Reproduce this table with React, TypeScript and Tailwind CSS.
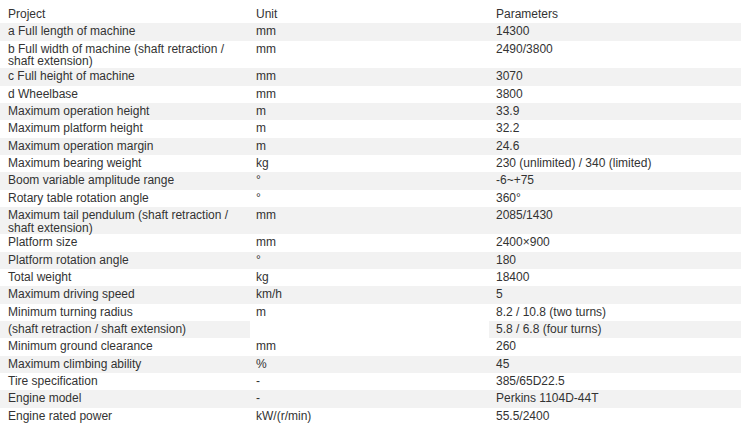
const rows: [string, string | null, string][] = [
  ['a Full length of machine', 'mm', '14300'],
  ['b Full width of machine (shaft retraction / shaft extension)', 'mm', '2490/3800'],
  ['c Full height of machine', 'mm', '3070'],
  ['d Wheelbase', 'mm', '3800'],
  ['Maximum operation height', 'm', '33.9'],
  ['Maximum platform height', 'm', '32.2'],
  ['Maximum operation margin', 'm', '24.6'],
  ['Maximum bearing weight', 'kg', '230 (unlimited) / 340 (limited)'],
  ['Boom variable amplitude range', '°', '-6~+75'],
  ['Rotary table rotation angle', '°', '360°'],
  ['Maximum tail pendulum (shaft retraction / shaft extension)', 'mm', '2085/1430'],
  ['Platform size', 'mm', '2400×900'],
  ['Platform rotation angle', '°', '180'],
  ['Total weight', 'kg', '18400'],
  ['Maximum driving speed', 'km/h', '5'],
  ['Minimum turning radius', 'm', '8.2 / 10.8 (two turns)'],
  ['(shaft retraction / shaft extension)', null, '5.8 / 6.8 (four turns)'],
  ['Minimum ground clearance', 'mm', '260'],
  ['Maximum climbing ability', '%', '45'],
  ['Tire specification', '-', '385/65D22.5'],
  ['Engine model', '-', 'Perkins 1104D-44T'],
  ['Engine rated power', 'kW/(r/min)', '55.5/2400'],
]

export default function App() {
  return (
    <div className="w-[750px] h-[429px] bg-white text-[#333] text-[12px] leading-[12.8px] font-['Liberation_Sans',Arial,sans-serif]">
      <table className="w-[741px] table-fixed border-collapse">
        <colgroup>
          <col className="w-[250px]" />
          <col className="w-[239px]" />
          <col className="w-[252px]" />
        </colgroup>
        <thead>
          <tr className="h-[23.3px]">
            <th className="p-0 pl-[8px] pt-[8px] text-left font-normal align-top">Project</th>
            <th className="p-0 pl-[6px] pt-[8px] text-left font-normal align-top">Unit</th>
            <th className="p-0 pl-[7px] pt-[8px] text-left font-normal align-top">Parameters</th>
          </tr>
        </thead>
        <tbody>
          {rows.map(([name, unit, value], i) => (
            <tr key={i} className={`h-[17.33px] ${i % 2 === 0 ? 'bg-[#f2f2f2]' : ''}`}>
              <td className="p-0 pt-[2px] pl-[8px] pr-[10px] align-top">{name}</td>
              {unit !== null && (
                <td
                  rowSpan={name === 'Minimum turning radius' ? 2 : 1}
                  className="p-0 pt-[2px] pl-[6px] align-top"
                >
                  {unit}
                </td>
              )}
              <td className="p-0 pt-[2px] pl-[7px] align-top">{value}</td>
            </tr>
          ))}
        </tbody>
      </table>
    </div>
  )
}
